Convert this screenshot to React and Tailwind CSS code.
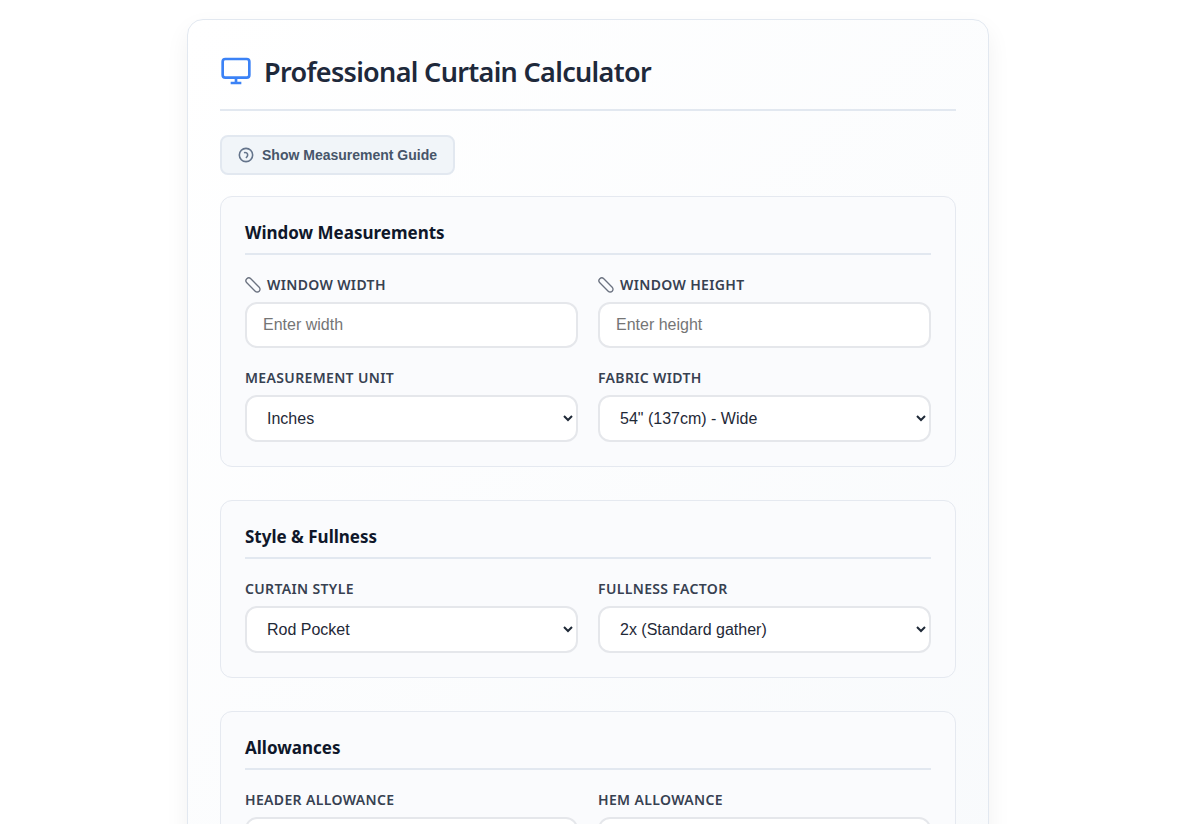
import React from "react";

const labelText = "text-sm leading-5 font-semibold uppercase tracking-wide text-[#374151]";
const control =
  "block w-full rounded-xl border-2 border-[#e5e7eb] bg-white font-['Liberation_Sans',sans-serif] text-base text-[#1f2937]";

function MonitorIcon() {
  return (
    <svg className="size-8 shrink-0" viewBox="0 0 24 24" fill="none" stroke="#3b82f6" strokeWidth="2" aria-hidden="true">
      <rect x="2" y="3" width="20" height="14" rx="2" />
      <path d="M8 21h8M12 17v4" />
    </svg>
  );
}

function HelpIcon() {
  return (
    <svg className="size-4 shrink-0" viewBox="0 0 24 24" fill="none" stroke="#64748b" strokeWidth="2.4" aria-hidden="true">
      <circle cx="12" cy="12" r="10" />
      <path d="M9 8.500c3-1 5.500 1 5.500 3.500 0 2-1.200 3-2.500 4.500" />
    </svg>
  );
}

function RulerIcon() {
  return (
    <svg className="size-4 shrink-0" viewBox="0 0 24 24" fill="none" stroke="#6b7280" strokeWidth="2" aria-hidden="true">
      <path d="M21.300 15.300a4.200 4.200 0 0 1-6 6L2.700 8.700a4.200 4.200 0 0 1 6-6Z" />
    </svg>
  );
}

function Field({ id, label, icon, children }) {
  return (
    <div className="flex min-w-0 flex-col gap-[7px]">
      <label htmlFor={id} className={`flex items-center gap-1.5 ${labelText}`}>
        {icon}
        {label}
      </label>
      {children}
    </div>
  );
}

function TextField({ id, label, icon, placeholder }) {
  return (
    <Field id={id} label={label} icon={icon}>
      <input id={id} type="number" placeholder={placeholder} className={`${control} h-[46px] px-4 placeholder:text-[#757575]`} />
    </Field>
  );
}

function SelectField({ id, label, options }) {
  return (
    <Field id={id} label={label}>
      <select id={id} className={`${control} h-[47px] pl-4`}>
        {options.map((o) => (
          <option key={o}>{o}</option>
        ))}
      </select>
    </Field>
  );
}

function Section({ title, children }) {
  return (
    <section className="rounded-xl border border-[#e5e9f0] bg-[#fafbfd] p-6">
      <h2 className="mb-5 border-b-2 border-[#e2e8f0] pb-2 text-[17px] leading-6 font-bold text-[#0f172a]">{title}</h2>
      <div className="grid grid-cols-1 gap-5 sm:grid-cols-2">{children}</div>
    </section>
  );
}

export default function App() {
  return (
    <div className="h-screen overflow-hidden bg-white pt-[19px] pr-6 font-['Noto_Sans',sans-serif]">
      <main className="mx-auto max-w-[802px] rounded-2xl border border-[#e2e8f0] bg-linear-135 from-white to-[#f8fafc] p-8 shadow-[0_10px_25px_rgba(0,0,0,0.06)]">
        <header className="mb-6 flex items-center gap-3 border-b-2 border-[#e2e8f0] pb-[19px]">
          <MonitorIcon />
          <h1 className="pt-0.5 text-[27px] leading-9 font-semibold tracking-tight text-[#1e293b]">Professional Curtain Calculator</h1>
        </header>
        <button
          type="button"
          className="mb-[21px] flex h-10 items-center gap-2 rounded-lg border-2 border-[#e2e8f0] bg-[#f1f5f9] px-4 font-['Liberation_Sans',sans-serif] text-sm font-bold text-[#475569]"
        >
          <HelpIcon />
          Show Measurement Guide
        </button>
        <form className="flex flex-col gap-[33px]">
          <Section title="Window Measurements">
            <TextField id="window-width" label="Window Width" placeholder="Enter width" icon={<RulerIcon />} />
            <TextField id="window-height" label="Window Height" placeholder="Enter height" icon={<RulerIcon />} />
            <SelectField id="unit" label="Measurement Unit" options={["Inches", "Centimeters"]} />
            <SelectField id="fabric-width" label="Fabric Width" options={['54" (137cm) - Wide', '45" (114cm) - Standard']} />
          </Section>
          <Section title="Style & Fullness">
            <SelectField id="style" label="Curtain Style" options={["Rod Pocket", "Grommet", "Pinch Pleat"]} />
            <SelectField id="fullness" label="Fullness Factor" options={["2x (Standard gather)", "1.5x (Light gather)"]} />
          </Section>
          <Section title="Allowances">
            <TextField id="header-allowance" label="Header Allowance" />
            <TextField id="hem-allowance" label="Hem Allowance" />
          </Section>
        </form>
      </main>
    </div>
  );
}
